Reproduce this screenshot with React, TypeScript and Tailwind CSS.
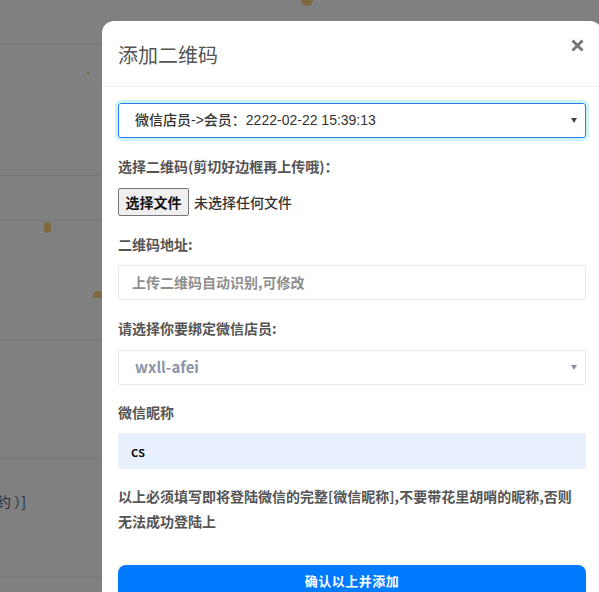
import React from "react";

const font = { fontFamily: '"Noto Sans CJK SC", "Noto Sans", sans-serif' };

function Caret({ color }: { color: string }) {
  return (
    <svg width="6" height="5" viewBox="0 0 6 5" aria-hidden="true">
      <polygon points="0,0 6,0 3,5" fill={color} />
    </svg>
  );
}

function Label({ children }: { children: React.ReactNode }) {
  return <div className="text-[14px] font-bold leading-[21px] text-[#555]">{children}</div>;
}

function BackgroundPage() {
  const rows = [44, 132, 45, 120, 118, 119];
  return (
    <div className="flex flex-col">
      {rows.map((h, i) => (
        <div key={i} className="flex items-end border-b border-[#777]" style={{ height: h }}>
          {i === 5 ? (
            <div className="mb-[65px] ml-[-3px] text-[14px] text-[#232a35]">约 ）]</div>
          ) : null}
        </div>
      ))}
    </div>
  );
}

export default function App() {
  return (
    <div className="relative h-[592px] w-[599px] overflow-hidden bg-[#808080]" style={font}>
      <BackgroundPage />

      {/* specks from the page behind */}
      <span className="absolute left-[87px] top-[71px] h-[3px] w-[3px] rounded-full bg-[#7d6a3e]" />
      <span className="absolute left-[44px] top-[222px] h-[11px] w-[7px] rounded-full bg-[#7d6a3e]" />
      <span className="absolute left-[93px] top-[291px] h-[7px] w-[10px] rounded-t-full bg-[#7d6a3e]" />
      <span className="absolute left-[301px] top-[-2px] h-[8px] w-[12px] rounded-b-full bg-[#7d6a3e]" />

      <div className="absolute left-[102px] top-[21px] w-[500px] rounded-t-[12px] bg-white">
        <div className="flex items-start justify-between border-b border-[#eee] pl-4 pr-[18px]">
          <h5 className="pt-[19px] pb-[17px] text-[20px] font-normal leading-[29px] text-[#555]">
            添加二维码
          </h5>
          <svg className="mt-[18px]" width="13" height="13" viewBox="0 0 13 13" aria-hidden="true">
            <path d="M1.5 1.5 L11.5 11.5 M11.5 1.5 L1.5 11.5" stroke="#777" strokeWidth="3" />
          </svg>
        </div>

        <div className="px-4 pt-4">
          <div className="flex h-[35px] items-center justify-between rounded-[3px] border border-[#2a7be8] pl-[16px] pr-[8px] shadow-[0_0_0_3px_#cdf4f2]">
            <span
              className="text-[14px] font-medium text-[#333]"
              style={{ fontFamily: '"Liberation Sans", "Noto Sans CJK SC", sans-serif' }}
            >
              微信店员-&gt;会员：2222-02-22 15:39:13
            </span>
            <Caret color="#444" />
          </div>

          <div className="mt-[18px]">
            <Label>选择二维码(剪切好边框再上传哦)：</Label>
          </div>
          <div className="mt-[11px] flex items-center">
            <span className="flex h-[28px] w-[71px] items-center justify-center rounded-[2px] border border-[#767676] bg-[#efefef] text-[14px] font-bold text-[#111]">
              选择文件
            </span>
            <span className="ml-[5px] text-[14px] font-medium text-[#333]">未选择任何文件</span>
          </div>

          <div className="mt-[18px]">
            <Label>二维码地址:</Label>
          </div>
          <div className="mt-[10px] flex h-[35px] items-center rounded-[2px] border border-[#eaeaea] pl-[13px] text-[14px] font-semibold text-[#8e8e8e]">
            上传二维码自动识别,可修改
          </div>

          <div className="mt-[18px]">
            <Label>请选择你要绑定微信店员:</Label>
          </div>
          <div className="mt-[11px] flex h-[35px] items-center justify-between rounded-[2px] border border-[#eaeaea] pl-[16px] pr-[8px]">
            <span className="text-[15px] font-semibold text-[#8c95a6]">wxll-afei</span>
            <Caret color="#8a909b" />
          </div>

          <div className="mt-[17px]">
            <Label>微信昵称</Label>
          </div>
          <div className="mt-[10px] flex h-[36px] items-center rounded-[2px] bg-[#e8f0fe] pl-[13px] text-[14px] font-medium text-black">
            cs
          </div>

          <p className="mt-[15px] text-[14px] font-bold leading-[25px] text-[#555]">
            以上必须填写即将登陆微信的完整[微信昵称],不要带花里胡哨的昵称,否则
            <br />
            无法成功登陆上
          </p>

          <div className="mt-[31px] flex h-[38px] items-start justify-center rounded-[8px] bg-[#007bff] pt-[6px] text-[13px] font-bold leading-[20px] tracking-[0.5px] text-white">
            确认以上并添加
          </div>
        </div>
      </div>
    </div>
  );
}
